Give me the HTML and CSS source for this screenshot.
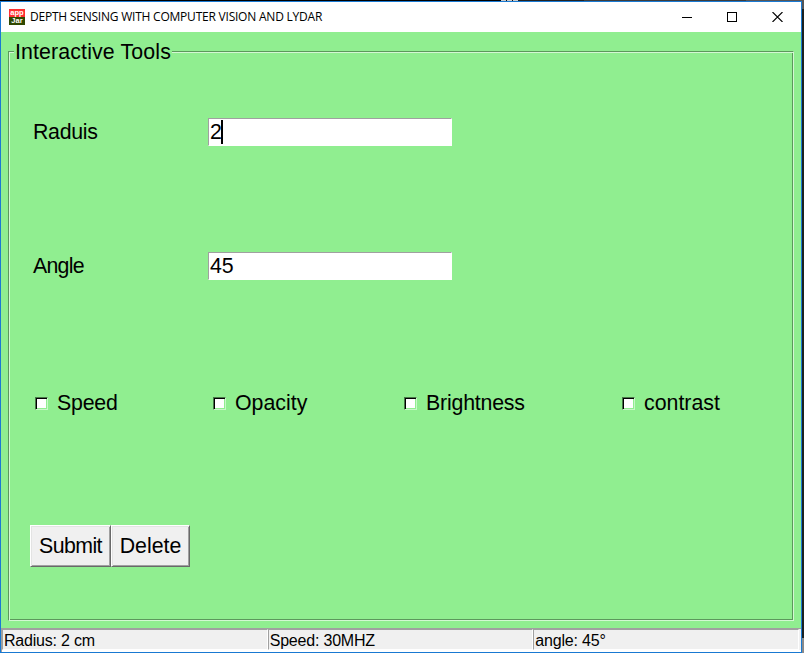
FILE: index.html
```html
<!DOCTYPE html>
<html lang="en">
<head>
<meta charset="utf-8">
<title>DEPTH SENSING WITH COMPUTER VISION AND LYDAR</title>
<link rel="stylesheet" href="styles.css">
</head>
<body>
<div class="desktop">
<main class="window">
  <header class="titlebar">
    <div class="logo"><span class="logo-top">app</span><span class="logo-bottom">Jar</span></div>
    <h1 class="title">DEPTH SENSING WITH COMPUTER VISION AND LYDAR</h1>
    <div class="controls">
      <svg width="10" height="10" shape-rendering="crispEdges"><path d="M0 5h10v1H0z"/></svg>
      <svg width="10" height="10" shape-rendering="crispEdges"><path d="M0 0h10v10H0zM1 1v8h8V1z" fill-rule="evenodd"/></svg>
      <svg width="11" height="10" viewBox="0 0 11 10"><path d="M.5 0l10 10M10.5 0l-10 10" fill="none" stroke="#000" stroke-width="1.1"/></svg>
    </div>
  </header>
  <form class="content">
    <section class="group">
      <h2 class="legend">Interactive Tools</h2>
      <div class="field first"><label class="label">Raduis</label><div class="entry">2<i class="caret"></i></div></div>
      <div class="field second"><label class="label">Angle</label><div class="entry">45</div></div>
      <div class="checks">
        <label class="check"><i class="box"></i><span>Speed</span></label>
        <label class="check"><i class="box"></i><span>Opacity</span></label>
        <label class="check"><i class="box"></i><span>Brightness</span></label>
        <label class="check"><i class="box"></i><span>contrast</span></label>
      </div>
      <div class="buttons">
        <button type="button" class="submit">Submit</button><button type="button" class="delete">Delete</button>
      </div>
    </section>
  </form>
  <footer class="status">
    <span class="cell">Radius: 2 cm</span><span class="cell">Speed: 30MHZ</span><span class="cell">angle: 45°</span>
  </footer>
</main>
</div>
</body>
</html>
```
FILE: styles.css
```css
* { box-sizing: border-box; }
body { margin: 0; font-family: "Liberation Sans", Arial, sans-serif; color: #000; }
.desktop {
  width: 804px; height: 653px; padding: 1px 2px 0 0; overflow: hidden;
  background:
    linear-gradient(#8a8a8a, #8a8a8a) 802px 638px / 2px 15px no-repeat,
    linear-gradient(#555, #555) 802px 0 / 2px 9px no-repeat,
    repeating-linear-gradient(90deg, #ccc 0 5px, #111 5px 6px) 501px 0 / 17px 1px no-repeat,
    linear-gradient(90deg, #000 0 518px, #222 518px 584px, #3c3c3c 584px 746px, #555 746px) 0 0 / 804px 1px no-repeat,
    #1c211f;
}
.window { display: flex; flex-direction: column; width: 802px; height: 652px; border: 1px solid #1979d2; background: #90ee90; }
.titlebar { display: flex; align-items: center; height: 30px; padding-left: 8px; background: #fff; }
.logo { display: flex; flex-direction: column; width: 16px; height: 16px; margin-top: -1px; color: #fff; background: linear-gradient(#ff3030 50%, #304800 50%); font: bold 7.5px/8px "Liberation Sans", sans-serif; text-align: center; }
.logo span { height: 8px; }
.logo-top { line-height: 7px; }
.title { flex: 1; margin: 0 0 0 5px; font: 12px/16px "Open Sans", "Noto Sans", sans-serif; white-space: nowrap; letter-spacing: -0.22px; }
.controls { display: flex; gap: 35px; margin-right: 18px; margin-top: -1px; }
.controls svg { display: block; }
.content { flex: 1; margin: 0; padding: 19px 7px 0; }
.group { width: 786px; height: 570px; border: 1px solid; border-color: #5c985c #d3f8d3 #d3f8d3 #5c985c; box-shadow: inset 1px 1px #d3f8d3, inset -1px -1px #5c985c; font-size: 21.33px; line-height: 24px; }
.legend { width: 158px; height: 24px; margin: -12px 0 0 5px; padding-left: 1px; background: #90ee90; font-size: inherit; font-weight: normal; white-space: nowrap; letter-spacing: 0.13px; }
.field { display: flex; align-items: center; height: 28px; padding-left: 24px; }
.first { margin-top: 54px; }
.second { margin-top: 106px; }
.label { width: 175px; letter-spacing: -0.3px; }
.second .label { letter-spacing: -0.75px; }
.entry { display: flex; align-items: center; width: 244px; height: 28px; padding-left: 1px; border: 1px solid #fff; border-color: #a0a0a0 #fff #fff #a0a0a0; background: #fff; }
.caret { width: 2px; height: 24px; margin-left: -1px; background: #000; }
.checks { display: flex; height: 24px; margin: 111px 0 0 26px; }
.check { display: flex; flex: none; align-items: center; width: 178px; letter-spacing: -0.2px; }
.check:nth-child(2) { width: 191px; letter-spacing: 0; }
.check:nth-child(3) { width: 218px; }
.check:nth-child(4) { width: 120px; letter-spacing: 0; }
.box { width: 13px; height: 13px; margin-right: 9px; border: 1px solid; border-color: #487748 #c8f7c8 #c8f7c8 #487748; background: #fff; box-shadow: inset 1px 1px #000, inset -1px -1px #90ee90; }
.buttons { display: flex; margin: 110px 0 0 21px; }
.buttons button { height: 42px; padding: 0; border: 1px solid; border-color: #fff #696969 #696969 #fff; background: #f0f0f0; box-shadow: inset 1px 1px #e3e3e3, inset -1px -1px #a0a0a0; font: inherit; color: #000; }
.buttons .submit { width: 81px; letter-spacing: -0.6px; }
.buttons .delete { width: 79px; }
.status { display: flex; height: 24px; padding: 0 2px 2px 0; border-top: 1px solid #a0a0a0; border-left: 1px solid #a0a0a0; background: #f0f0f0; font-size: 16px; line-height: 22px; box-shadow: inset 0 -2px #fff; letter-spacing: -0.2px; }
.cell { width: 266px; height: 21px; border: 1px solid; border-color: #a0a0a0 #fff #fff #a0a0a0; padding-left: 1px; background: #f0f0f0; }
```
